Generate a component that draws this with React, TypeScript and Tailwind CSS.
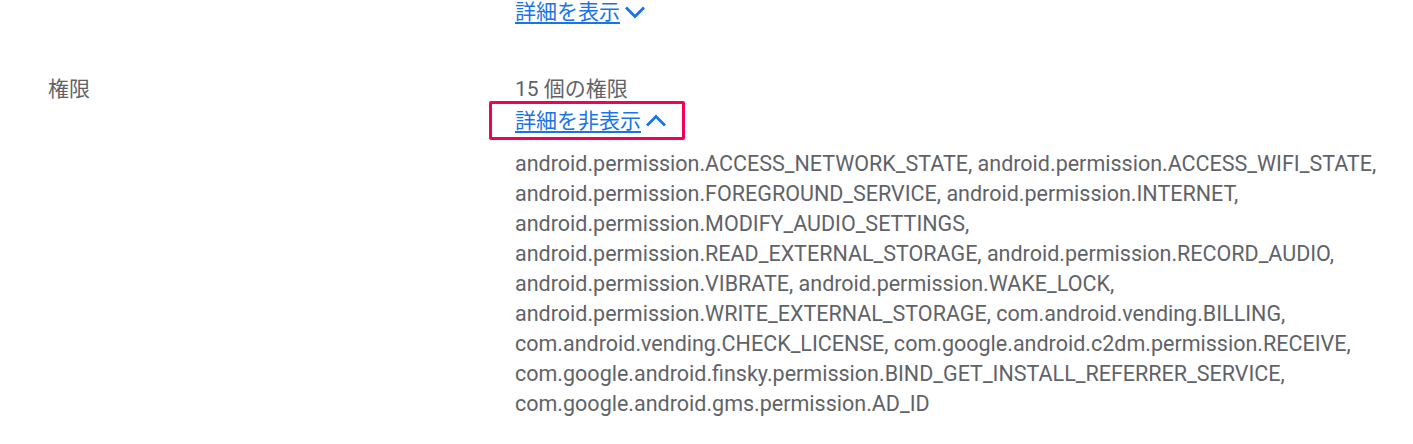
import React from 'react';

const permissions = [
    'android.permission.ACCESS_NETWORK_STATE, android.permission.ACCESS_WIFI_STATE,',
    'android.permission.FOREGROUND_SERVICE, android.permission.INTERNET,',
    'android.permission.MODIFY_AUDIO_SETTINGS,',
    'android.permission.READ_EXTERNAL_STORAGE, android.permission.RECORD_AUDIO,',
    'android.permission.VIBRATE, android.permission.WAKE_LOCK,',
    'android.permission.WRITE_EXTERNAL_STORAGE, com.android.vending.BILLING,',
    'com.android.vending.CHECK_LICENSE, com.google.android.c2dm.permission.RECEIVE,',
    'com.google.android.finsky.permission.BIND_GET_INSTALL_REFERRER_SERVICE,',
    'com.google.android.gms.permission.AD_ID',
];

const Chevron: React.FC<{ up?: boolean }> = ({ up }) => (
    <svg width="22" height="22" viewBox="0 0 22 22" className="ml-[4px]" fill="none">
        <path
            d={up ? 'M2 15.5l9-9 9 9' : 'M2 6.5l9 9 9-9'}
            stroke="#1a73e8"
            strokeWidth="2.8"
        />
    </svg>
);

export default function App() {
    return (
        <div className="w-[1413px] h-[444px] bg-white overflow-hidden font-['Roboto','Noto_Sans_CJK_JP',sans-serif] text-[#5f6368]">
            <div className="pl-[515px] -mt-[3px]">
                <a href="#" className="inline-flex items-center text-[21px] leading-[30px] text-[#1a73e8] underline underline-offset-[3px]">
                    詳細を表示
                    <Chevron />
                </a>
            </div>
            <div className="flex mt-[51px]">
                <div className="w-[515px] shrink-0 pl-[48px] text-[21px] leading-[23px]">権限</div>
                <div className="flex flex-col">
                    <div className="text-[21px] leading-[23px]">15 個の権限</div>
                    <div className="-ml-[26px] self-start">
                        <div className="flex items-center border-[3px] border-[#f50057] rounded-[2px] pl-[23px] pr-[15px] h-[39px]">
                            <a href="#" className="inline-flex items-center text-[21px] leading-[30px] text-[#1a73e8] underline underline-offset-[3px]">
                                詳細を非表示
                                <Chevron up />
                            </a>
                        </div>
                    </div>
                    <div className="mt-[9px] text-[21.5px] leading-[30px]">
                        {permissions.map((p) => (
                            <div key={p} className="whitespace-nowrap">{p}</div>
                        ))}
                    </div>
                </div>
            </div>
        </div>
    );
}
